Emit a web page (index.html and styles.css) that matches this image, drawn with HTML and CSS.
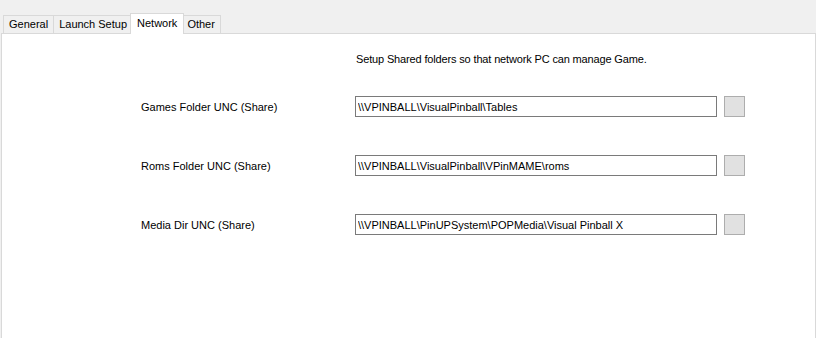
FILE: index.html
```html
<!DOCTYPE html>
<html lang="en">
<head>
    <meta charset="UTF-8">
    <title>Network</title>
    <link rel="stylesheet" href="styles.css">
</head>
<body>
    <div class="tabs">
        <div class="tab">General</div>
        <div class="tab">Launch Setup</div>
        <div class="tab active">Network</div>
        <div class="tab">Other</div>
    </div>

    <!-- Network page -->
    <div class="panel">
        <p class="note">Setup Shared folders so that network PC can manage Game.</p>
        <div class="fields">
            <label class="field-label">Games Folder UNC (Share)</label>
            <input class="field-input" type="text" value="\\VPINBALL\VisualPinball\Tables">
            <button class="browse"></button>

            <label class="field-label">Roms Folder UNC (Share)</label>
            <input class="field-input" type="text" value="\\VPINBALL\VisualPinball\VPinMAME\roms">
            <button class="browse"></button>

            <label class="field-label">Media Dir UNC (Share)</label>
            <input class="field-input" type="text" value="\\VPINBALL\PinUPSystem\POPMedia\Visual Pinball X">
            <button class="browse"></button>
        </div>
    </div>
</body>
</html>
```
FILE: styles.css
```css
body {
    font-family: "Liberation Sans", Arial, sans-serif;
    font-size: 11px;
    color: #000;
    margin: 0;
    padding: 0;
    height: 100vh;
    background-color: #f0f0f0;
    overflow: hidden;
    display: flex;
    flex-direction: column;
}
.tabs {
    display: flex;
    align-items: flex-end;
    padding: 13px 0 0 3px;
    height: 20px;
}
.tab {
    height: 17px;
    line-height: 17px;
    padding: 0 5px;
    border: 1px solid #d9d9d9;
    border-bottom: none;
    margin-left: -1px;
    background-color: #f0f0f0;
}
.tab:first-child {
    margin-left: 0;
}
.tab.active {
    position: relative;
    z-index: 1;
    height: 20px;
    line-height: 18px;
    margin: 0 -2px -1px -3px;
    padding: 0 6px;
    background-color: #fff;
}
.panel {
    flex: 1;
    margin-left: 1px;
    background-color: #fff;
    border: 1px solid #d9d9d9;
    border-bottom: none;
    padding: 18px 0 0 139px;
}
.note {
    margin: 0 0 30px 215px;
    line-height: 14px;
    letter-spacing: -0.15px;
}
.fields {
    display: grid;
    grid-template-columns: 207px 362px 21px;
    grid-auto-rows: 21px;
    column-gap: 7px;
    row-gap: 38px;
    align-items: center;
}
.field-input {
    box-sizing: border-box;
    height: 21px;
    margin: 0;
    padding: 0 2px;
    border: 1px solid #7a7a7a;
    font-family: inherit;
    font-size: 11px;
    color: #000;
    outline: none;
}
.browse {
    box-sizing: border-box;
    width: 21px;
    height: 21px;
    margin: 0;
    padding: 0;
    border: 1px solid #adadad;
    background-color: #e1e1e1;
}
```
